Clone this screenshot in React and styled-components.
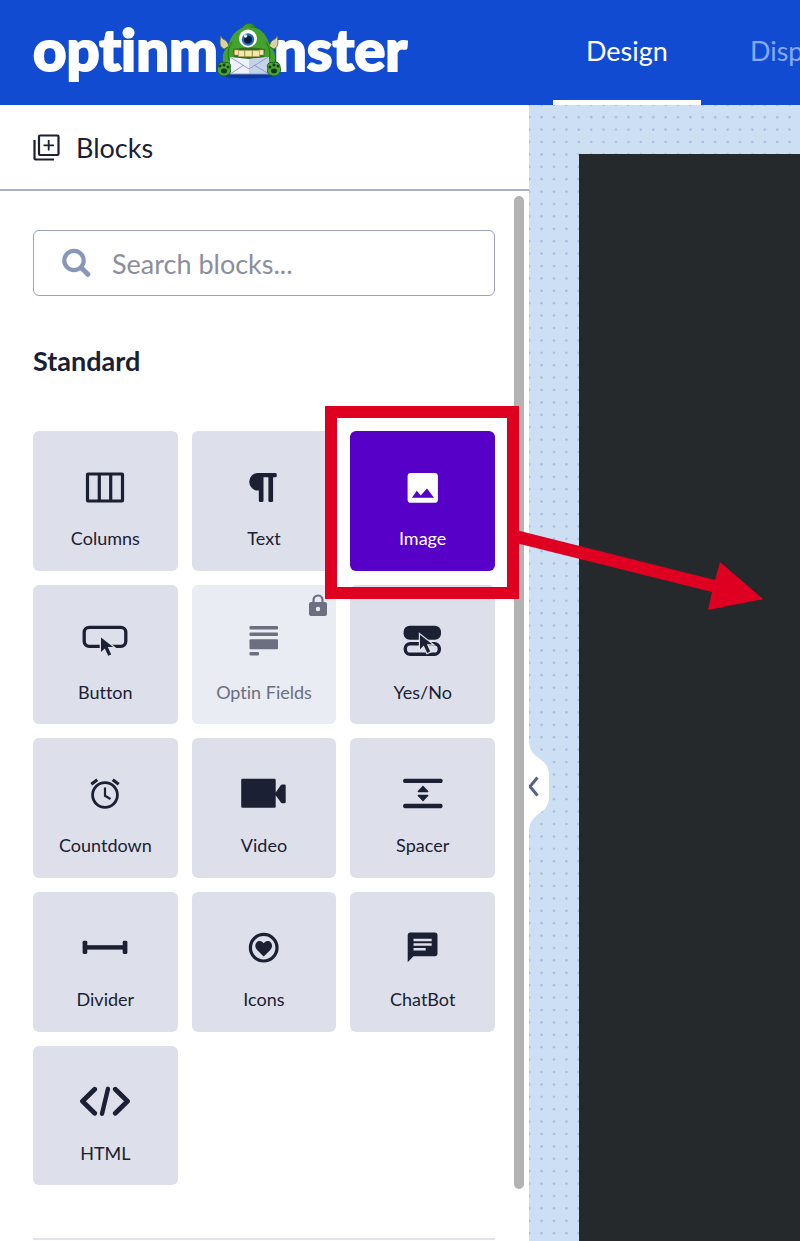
import React, { useState } from "react";
import styled, { createGlobalStyle, css } from "styled-components";

const INK = "#1b2033";
const TILE = "#dde0eb";
const RED = "#df0021";

const CURSOR = "M0 0v14.5l3.8-3.6 3.4 7.4 3-1.4-3.4-7.3h5.4z";

const icons = {
  columns: (
    <g fill="none" stroke="currentColor" strokeWidth="3.2">
      <rect x="6.5" y="3" width="35" height="27" rx="0.5" />
      <path d="M18.3 3v27M29.7 3v27" />
    </g>
  ),
  text: (
    <path
      fill="currentColor"
      d="M18 2h17.5a1.2 1.2 0 0 1 1.2 1.2v1.9a1.2 1.2 0 0 1-1.2 1.2h-2.4v23.4a1.4 1.4 0 0 1-1.4 1.4h-1.9a1.4 1.4 0 0 1-1.4-1.4V6.3h-4.9v23.4a1.4 1.4 0 0 1-1.4 1.4h-1.9a1.4 1.4 0 0 1-1.4-1.4V19.6H18A8.8 8.8 0 0 1 18 2z"
    />
  ),
  image: (
    <path
      fill="currentColor"
      fillRule="evenodd"
      d="M12 2h23.5a3.4 3.4 0 0 1 3.4 3.4v23a3.4 3.4 0 0 1-3.4 3.4H12a3.4 3.4 0 0 1-3.4-3.4v-23A3.4 3.4 0 0 1 12 2zM12.9 26.7h22.1l-7-9.2-6.3 6.9-3.9-4.6z"
    />
  ),
  button: (
    <>
      <rect
        x="3.2"
        y="2.3"
        width="41.6"
        height="19"
        rx="5"
        fill="none"
        stroke="currentColor"
        strokeWidth="3.3"
      />
      <path
        transform="translate(20 12.5)"
        d={CURSOR}
        fill="currentColor"
        stroke={TILE}
        strokeWidth="2.6"
        paintOrder="stroke"
      />
    </>
  ),
  fields: (
    <g fill="currentColor">
      <rect x="9.5" y="1" width="28.5" height="3.5" rx="1" />
      <rect x="9.5" y="7.5" width="28.5" height="3.5" rx="1" />
      <rect x="9.5" y="14.3" width="28.5" height="10" rx="1" />
      <rect x="9.5" y="27" width="9.5" height="3.5" rx="1" />
    </g>
  ),
  yesno: (
    <>
      <rect x="4.6" y="0.7" width="37.4" height="14" rx="6" fill="currentColor" />
      <rect
        x="6.3"
        y="18.7"
        width="34"
        height="10.6"
        rx="4.8"
        fill="none"
        stroke="currentColor"
        strokeWidth="3.4"
      />
      <path
        transform="translate(21 9.7)"
        d={CURSOR}
        fill="currentColor"
        stroke={TILE}
        strokeWidth="2.4"
        paintOrder="stroke"
      />
    </>
  ),
  countdown: (
    <g fill="none" stroke="currentColor" strokeWidth="2.8">
      <circle cx="24" cy="17" r="12.4" />
      <path d="M10.3 6.2l6-4.4M37.7 6.2l-6-4.4" strokeWidth="3.2" />
      <path d="M24 9.5v8.3l5.5 3.2" strokeWidth="2.2" />
    </g>
  ),
  video: (
    <path
      fill="currentColor"
      d="M2.4.8H34.5a1.2 1.2 0 0 1 1.2 1.2v12.4l5.2-7.4a1.5 1.5 0 0 1 1.2-.6h2.4a1.2 1.2 0 0 1 1.2 1.2v16.4a1.2 1.2 0 0 1-1.2 1.2h-2.4a1.5 1.5 0 0 1-1.2-.6l-5.2-7.4v11.4a1.2 1.2 0 0 1-1.2 1.2H2.4a1.2 1.2 0 0 1-1.2-1.2V2A1.2 1.2 0 0 1 2.4.8z"
    />
  ),
  spacer: (
    <g fill="currentColor">
      <rect x="4.2" y="0.7" width="39.3" height="4.4" rx="1.6" />
      <rect x="4.2" y="25.8" width="39.3" height="4.4" rx="1.6" />
      <path d="M24 7.6l5.2 5.4a.7.7 0 0 1-.5 1.2h-9.4a.7.7 0 0 1-.5-1.2zM24 23.4l5.2-5.4a.7.7 0 0 0-.5-1.2h-9.4a.7.7 0 0 0-.5 1.2z" />
    </g>
  ),
  divider: (
    <g fill="currentColor">
      <rect x="1.6" y="8.8" width="4.7" height="13.2" rx="1.4" />
      <rect x="41.7" y="8.8" width="4.7" height="13.2" rx="1.4" />
      <rect x="4" y="13.2" width="40" height="4.4" />
    </g>
  ),
  heart: (
    <>
      <circle
        cx="23.7"
        cy="15.7"
        r="13.3"
        fill="none"
        stroke="currentColor"
        strokeWidth="3.2"
      />
      <path
        fill="currentColor"
        d="M23.7 24.4l-6.4-6.2c-4-4.2-1.2-9.2 2.3-9.2 2 0 3.3 1.1 4.1 2.2.8-1.1 2.1-2.2 4.1-2.2 3.5 0 6.3 5 2.3 9.2z"
      />
    </>
  ),
  chat: (
    <>
      <path
        fill="currentColor"
        d="M11 .5h24.8a2.7 2.7 0 0 1 2.7 2.7v18.3a2.7 2.7 0 0 1-2.7 2.7H14.5L8.7 30.2V3A2.5 2.5 0 0 1 11 .5z"
      />
      <path
        stroke={TILE}
        strokeWidth="2.5"
        d="M14.5 8h18.2M14.5 12.6h18.2M14.5 17.2h12.2"
      />
    </>
  ),
  html: (
    <g
      fill="none"
      stroke="currentColor"
      strokeWidth="4.8"
      strokeLinecap="round"
      strokeLinejoin="round"
    >
      <path d="M13.7 3.2L1.5 15.2l12.2 12M34.3 3.2l12.2 12-12.2 12" />
      <path d="M27 2.8l-6 25" strokeWidth="4.4" />
    </g>
  ),
};

const blocks = [
  { label: "Columns", icon: "columns" },
  { label: "Text", icon: "text" },
  { label: "Image", icon: "image" },
  { label: "Button", icon: "button" },
  { label: "Optin Fields", icon: "fields", locked: true },
  { label: "Yes/No", icon: "yesno" },
  { label: "Countdown", icon: "countdown" },
  { label: "Video", icon: "video" },
  { label: "Spacer", icon: "spacer" },
  { label: "Divider", icon: "divider" },
  { label: "Icons", icon: "heart" },
  { label: "ChatBot", icon: "chat" },
  { label: "HTML", icon: "html" },
];

const Monster = () => (
  <MonsterSvg viewBox="0 0 66 56" aria-hidden="true">
    <ellipse cx="33" cy="53" rx="24" ry="2.5" fill="#0b379f" />
    <path
      d="M26 5c3-6 11-6 14 0-4-2-6-1.5-8 1"
      fill="#3f9a2c"
      stroke="#23701f"
      strokeWidth="0.8"
    />
    <path
      d="M9 26c-5-1-6-6-4-13 1 4 4 3 6 6l3 6zM57 26c5-1 6-6 4-13-1 4-4 3-6 6l-3 6z"
      fill="#d8d3a0"
      stroke="#6f7145"
      strokeWidth="0.9"
    />
    <path
      d="M33 4C20 4 15 13 12 23c-4 4-6 9-5 15 1 4 5 7 9 7h34c4 0 8-3 9-7 1-6-1-11-5-15C51 13 46 4 33 4z"
      fill="#43a12d"
    />
    <path
      d="M16 19c-4 6-5 11-3 18M50 19c4 6 5 11 3 18M12 24l-3 2M54 24l3 2"
      fill="none"
      stroke="#2a7d23"
      strokeWidth="1.2"
    />
    <path d="M17 26q16-3 32 0l-1 9q-15 4-30 0z" fill="#2d6f20" />
    <path
      d="M18.5 27h4v5h-4zM22.5 27.5h6v6h-6zM29 27.5h7v6h-7zM36.5 27.5h7v6h-7zM43.5 27h4v5h-4z"
      fill="#f4e8ac"
      stroke="#b79f58"
      strokeWidth="0.6"
    />
    <path d="M14 34l19 2 20-2v17H14z" fill="#eef2fa" />
    <path d="M33 36l20-2v17H33z" fill="#c5d3ea" />
    <path
      d="M14 34l19 12 19-12M14 51l14-9M53 51L38 42M14 51h39"
      fill="none"
      stroke="#8795b5"
      strokeWidth="0.9"
    />
    <circle cx="32" cy="15.5" r="9" fill="#fff" />
    <circle cx="32" cy="16.5" r="6.2" fill="#256bbd" />
    <circle cx="32" cy="16.5" r="4" fill="#071b3f" />
    <circle cx="29.5" cy="13" r="1.8" fill="#d7efff" />
    <path
      d="M2 44c0-4 3-6 7-4 4-2 7 2 5 5 2 4-1 8-6 8-5 0-8-5-6-9zM64 44c0-4-3-6-7-4-4-2-7 2-5 5-2 4 1 8 6 8 5 0 8-5 6-9z"
      fill="#4aa633"
      stroke="#1d5e1d"
      strokeWidth="1"
    />
    <g fill="#123d1b">
      <circle cx="4" cy="43" r="1.5" />
      <circle cx="8" cy="42" r="1.6" />
      <circle cx="12" cy="44" r="1.5" />
      <ellipse cx="8" cy="48" rx="3" ry="2.4" />
      <circle cx="62" cy="43" r="1.5" />
      <circle cx="58" cy="42" r="1.6" />
      <circle cx="54" cy="44" r="1.5" />
      <ellipse cx="58" cy="48" rx="3" ry="2.4" />
    </g>
  </MonsterSvg>
);

const App = () => {
  const [selected, setSelected] = useState("Image");
  const [query, setQuery] = useState("");

  const visible = blocks.filter(({ label }) =>
    label.toLowerCase().includes(query.toLowerCase())
  );

  return (
    <Page>
      <GlobalStyle />
      <Header>
        <Logo href="#" aria-label="optinmonster">
          <span>optinm</span>
          <Monster />
          <span>nster</span>
        </Logo>
        <Tabs>
          <Tab href="#design" $active>
            Design
          </Tab>
          <Tab href="#display">Display</Tab>
        </Tabs>
      </Header>
      <Main>
        <Sidebar>
          <PanelTitle>
            <svg width="27" height="27" viewBox="0 0 27 27" aria-hidden="true">
              <g fill="none" stroke={INK} strokeWidth="2.2">
                <rect x="6" y="1.5" width="19.5" height="19.5" rx="1" />
                <path d="M1.5 6v18.5a1 1 0 0 0 1 1H21" />
                <path d="M15.7 6v10.5M10.5 11.3H21" strokeWidth="1.8" />
              </g>
            </svg>
            Blocks
          </PanelTitle>
          <PanelBody>
            <Content>
              <SearchBox>
                <svg width="30" height="30" viewBox="0 0 30 30" aria-hidden="true">
                  <g fill="none" stroke="#8796ba" strokeLinecap="round">
                    <circle cx="13" cy="12.5" r="9.7" strokeWidth="4.2" />
                    <path d="M20.5 20l6.3 6.3" strokeWidth="5" />
                  </g>
                </svg>
                <input
                  type="text"
                  aria-label="Search blocks"
                  placeholder="Search blocks..."
                  value={query}
                  onChange={(e) => setQuery(e.target.value)}
                />
              </SearchBox>
              <SectionTitle>Standard</SectionTitle>
              <Grid>
                {visible.map(({ label, icon, locked }) => (
                  <Cell key={label}>
                    <Tile
                      type="button"
                      disabled={locked}
                      $selected={selected === label}
                      onClick={() => setSelected(label)}
                    >
                      <svg width="52" height="32" viewBox="-2 0 52 32" aria-hidden="true">
                        {icons[icon]}
                      </svg>
                      {label}
                    </Tile>
                    {locked && (
                      <Lock viewBox="0 0 18 22" aria-hidden="true">
                        <path
                          d="M4.5 9V6a4.5 4.5 0 0 1 9 0v3"
                          fill="none"
                          stroke="currentColor"
                          strokeWidth="2.2"
                        />
                        <path
                          fill="currentColor"
                          fillRule="evenodd"
                          d="M2 8h14a2 2 0 0 1 2 2v10a2 2 0 0 1-2 2H2a2 2 0 0 1-2-2V10a2 2 0 0 1 2-2zm7 4.8a2.2 2.2 0 1 0 0 4.4 2.2 2.2 0 0 0 0-4.4z"
                        />
                      </Lock>
                    )}
                    {label === "Image" && (
                      <Callout>
                        <svg width="257" height="86" viewBox="0 0 257 86" aria-hidden="true">
                          <path d="M1 2l207 52 5-18 43 37-55 11 4-18L1 15z" fill={RED} />
                        </svg>
                      </Callout>
                    )}
                  </Cell>
                ))}
              </Grid>
              <Rule />
            </Content>
            <ScrollThumb />
          </PanelBody>
        </Sidebar>
        <Workspace>
          <Collapse type="button" aria-label="Collapse panel">
            <svg width="21" height="88" viewBox="0 0 21 88" aria-hidden="true">
              <path d="M0 0c1 10 5 12 11 17 7 5 9 10 9 17v20c0 7-2 12-9 17C5 76 1 78 0 88z" fill="#fff" />
              <path d="M8.5 35.5L1 44.5l7.5 9" fill="none" stroke="#56648a" strokeWidth="3" />
            </svg>
          </Collapse>
          <Canvas />
        </Workspace>
      </Main>
    </Page>
  );
};

export default App;

// one tile holds five dots each way
const dots = [0, 1, 2, 3, 4]
  .flatMap((y) =>
    [0, 1, 2, 3, 4].map(
      (x) => `<circle cx="${x + 0.5}" cy="${y + 0.5}" r="0.11"/>`
    )
  )
  .join("");
const dotTile = encodeURIComponent(
  `<svg xmlns="http://www.w3.org/2000/svg" width="62" height="62" viewBox="0 0 5 5" fill="#a9c1e4">${dots}</svg>`
);

const GlobalStyle = createGlobalStyle`
  * {
    box-sizing: border-box;
  }
  body {
    margin: 0;
    overflow-x: hidden;
    font-family: Lato, "Open Sans", sans-serif;
    font-variant-ligatures: none;
    color: ${INK};
  }
`;

const Page = styled.div`
  display: flex;
  flex-direction: column;
  min-height: 100vh;
  overflow: hidden;
`;

const Header = styled.header`
  display: flex;
  height: 105px;
  padding-left: 33px;
  background: #104bd2;
`;

const Logo = styled.a`
  display: flex;
  align-items: center;
  flex: 0 0 520px;
  padding-bottom: 8px;
  color: white;
  font-size: 58px;
  font-weight: 900;
  line-height: 96px;
  text-decoration: none;
  -webkit-text-stroke: 2px white;
`;

const MonsterSvg = styled.svg`
  flex: none;
  position: relative;
  width: 66px;
  height: 56px;
  margin: 4px -8px 0 -2px;
`;

const Tabs = styled.nav`
  display: flex;
  gap: 16px;
`;

const Tab = styled.a`
  display: flex;
  align-items: center;
  padding: 0 33px;
  border-bottom: 5px solid transparent;
  color: #84a9f2;
  font-size: 27px;
  white-space: nowrap;
  text-decoration: none;
  ${({ $active }) =>
    $active &&
    css`
      color: white;
      border-color: white;
    `}
`;

const Main = styled.main`
  display: flex;
  flex: 1;
`;

const Sidebar = styled.aside`
  display: flex;
  flex-direction: column;
  flex: 0 0 529px;
  position: relative;
  z-index: 1;
  background: white;
`;

const PanelTitle = styled.h1`
  display: flex;
  align-items: center;
  gap: 16px;
  height: 86px;
  margin: 0;
  padding-left: 33px;
  border-bottom: 2px solid #a9aecb;
  font-size: 27px;
  font-weight: 400;
`;

const PanelBody = styled.div`
  display: flex;
  flex: 1;
  gap: 19px;
  padding: 0 5px 0 33px;
`;

const Content = styled.div`
  flex: 1;
  padding-top: 39px;
`;

const SearchBox = styled.label`
  display: flex;
  align-items: center;
  gap: 21px;
  height: 66px;
  padding: 0 27px;
  border: 1px solid #9b9fc2;
  border-radius: 6px;
  svg {
    flex: none;
  }
  input {
    flex: 1;
    min-width: 0;
    padding: 0;
    border: none;
    outline: none;
    background: none;
    color: inherit;
    font: inherit;
    font-size: 27px;
    &::placeholder {
      color: #8b8e9c;
      opacity: 1;
    }
  }
`;

const SectionTitle = styled.h2`
  margin: 49px 0 54px;
  font-size: 27px;
  font-weight: 700;
  line-height: 32px;
`;

const Grid = styled.ul`
  display: grid;
  grid-template-columns: repeat(3, 1fr);
  gap: 14px;
  margin: 0;
  padding: 0;
  list-style: none;
`;

const Cell = styled.li`
  position: relative;
`;

const Tile = styled.button`
  display: flex;
  flex-direction: column;
  align-items: center;
  justify-content: flex-start;
  gap: 23px;
  width: 100%;
  aspect-ratio: 29 / 28;
  padding: 40px 0 0;
  border: none;
  border-radius: 6px;
  background: ${({ $selected }) => ($selected ? "#5700c8" : TILE)};
  color: ${({ $selected }) => ($selected ? "white" : INK)};
  font-family: inherit;
  font-size: 18px;
  font-variant-ligatures: none;
  line-height: 24px;
  cursor: pointer;
  svg {
    flex: none;
  }
  &:disabled {
    background: #e9ecf2;
    color: #6b6f80;
    cursor: default;
  }
`;

const Lock = styled.svg`
  position: absolute;
  top: 9px;
  right: 9px;
  width: 18px;
  height: 22px;
  color: #6b6f80;
`;

const Callout = styled.div`
  position: absolute;
  z-index: 2;
  inset: -25px -24px -28px -25px;
  border: 12px solid ${RED};
  pointer-events: none;
  svg {
    position: absolute;
    top: 108px;
    left: 100%;
  }
`;

const Rule = styled.hr`
  margin: 53px 0 0;
  border: none;
  border-top: 2px solid #e1e3ec;
`;

const ScrollThumb = styled.div`
  width: 10px;
  margin: 5px 0 52px;
  border-radius: 5px;
  background: #b3b3b3;
`;

const Workspace = styled.section`
  display: flex;
  flex: 1;
  position: relative;
  padding: 49px 0 0 50px;
  background: #cddff2 url("data:image/svg+xml,${dotTile}") -6px 6px;
`;

const Collapse = styled.button`
  position: absolute;
  top: 637px;
  left: 0;
  padding: 0;
  border: none;
  background: none;
  cursor: pointer;
  svg {
    display: block;
  }
`;

const Canvas = styled.div`
  flex: 1;
  background: #25292c;
`;
